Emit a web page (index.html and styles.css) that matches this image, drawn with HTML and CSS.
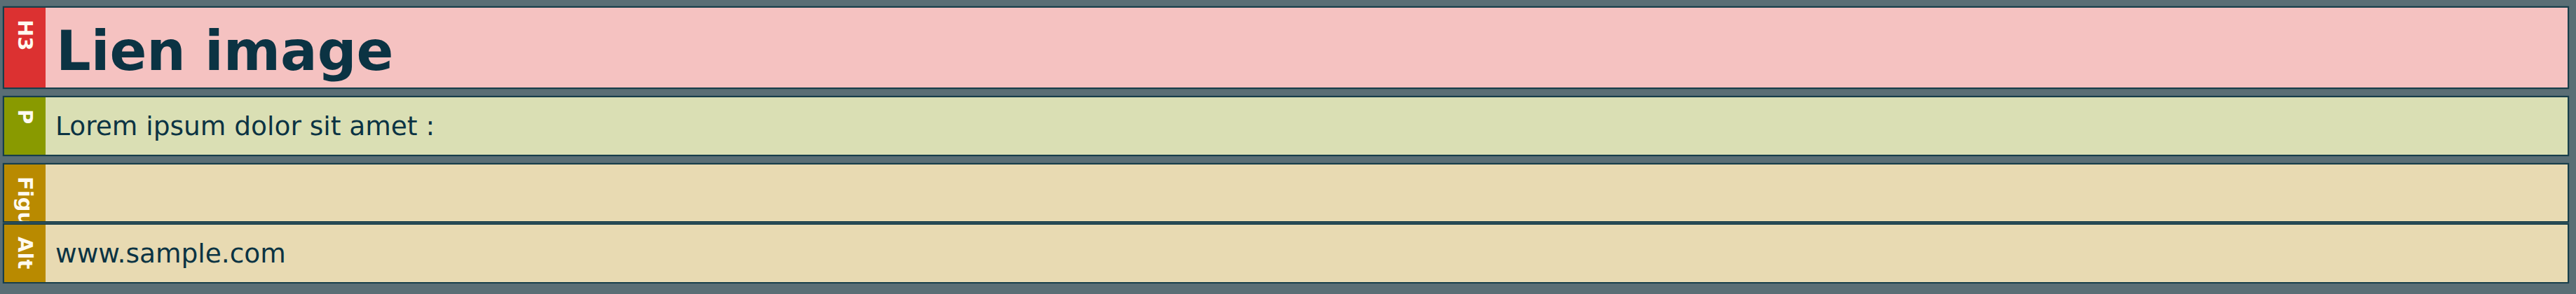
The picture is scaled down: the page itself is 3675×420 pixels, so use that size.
FILE: index.html
```html
<!DOCTYPE html>
<html lang="fr">
<head>
<meta charset="utf-8">
<title>Lien image</title>
<link rel="stylesheet" href="styles.css">
</head>
<body>
<div class="doc">
  <div class="blk blk-h3">
    <div class="tag">H3</div>
    <div class="content"><h3 class="title">Lien image</h3></div>
  </div>
  <div class="blk blk-p">
    <div class="tag">P</div>
    <div class="content text">Lorem ipsum dolor sit amet :</div>
  </div>
  <div class="blk blk-fig">
    <div class="tag">Figure</div>
    <div class="content empty"></div>
  </div>
  <div class="blk blk-fig blk-alt">
    <div class="tag">Alt</div>
    <div class="content text">www.sample.com</div>
  </div>
</div>
</body>
</html>
```

FILE: styles.css
```css
html, body {
  margin: 0;
  padding: 0;
  background: #5a6e75;
}
body {
  padding: 9px 10px 0 4px;
  font-family: "DejaVu Sans", Verdana, sans-serif;
  color: #0b3343;
}
.doc {
  display: flex;
  flex-direction: column;
}
.blk {
  display: flex;
  border: 2px solid #173e4a;
  box-shadow: 0 0 1px #173e4a;
  margin-bottom: 10px;
}
.blk-fig {
  margin-bottom: 1px;
}
.blk-alt {
  margin-bottom: 0;
}
.tag {
  flex: 0 0 59px;
  width: 59px;
  contain: size;
  writing-mode: vertical-rl;
  line-height: 59px;
  white-space: nowrap;
  overflow: hidden;
  color: #fffaf0;
  font-weight: bold;
  font-size: 29px;
  padding-top: 17px;
  box-sizing: border-box;
}
.blk-h3 { background: #f5c2c1; }
.blk-h3 .tag { background: #dc3131; }
.blk-p { background: #dadfb4; }
.blk-p .tag { background: #899a00; }
.blk-fig { background: #e8dab2; }
.blk-fig .tag { background: #b98a00; }
.content {
  flex: 1;
  padding: 0 0 0 15px;
}
.title {
  margin: 0;
  padding-top: 10px;
  font-size: 78px;
  font-weight: bold;
  line-height: 104px;
}
.text {
  font-size: 37.5px;
  line-height: 82px;
  height: 82px;
  padding-left: 14px;
}
.empty {
  height: 81px;
}
```
